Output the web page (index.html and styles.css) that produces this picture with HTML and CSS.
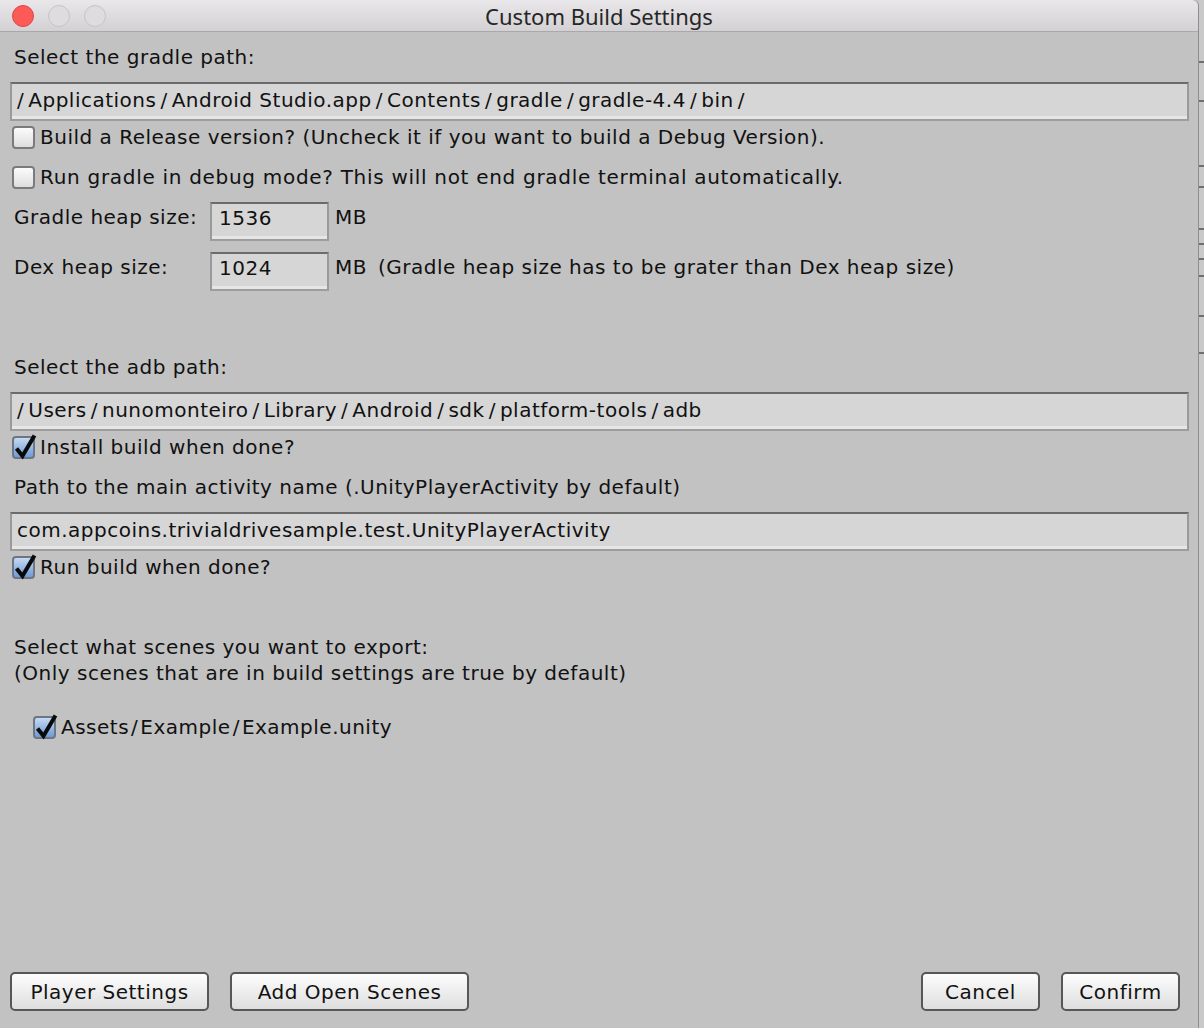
FILE: index.html
```html
<!DOCTYPE html>
<html>
<head>
<meta charset="utf-8">
<title>Custom Build Settings</title>
<link rel="stylesheet" href="styles.css">
</head>
<body>
<div class="screen">
  <div class="window">
    <div class="titlebar">
      <div class="lights">
        <span class="light red"></span>
        <span class="light"></span>
        <span class="light"></span>
      </div>
      <div class="title">Custom Build Settings</div>
    </div>
    <div class="content">
      <div class="label l-first">Select the gradle path:</div>
      <div class="field f-path"><span class="sl">/</span>Applications<span class="sl">/</span>Android Studio.app<span class="sl">/</span>Contents<span class="sl">/</span>gradle<span class="sl">/</span>gradle-4.4<span class="sl">/</span>bin<span class="sl">/</span></div>
      <label class="check c-after-field"><span class="box"></span><span>Build a Release version? (Uncheck it if you want to build a Debug Version).</span></label>
      <label class="check c-second"><span class="box"></span><span class="wide">Run gradle in debug mode? This will not end gradle terminal automatically.</span></label>
      <div class="heap h-first">
        <span class="heap-label">Gradle heap size:</span>
        <span class="field f-small">1536</span>
        <span class="unit">MB</span>
      </div>
      <div class="heap h-second">
        <span class="heap-label">Dex heap size:</span>
        <span class="field f-small">1024</span>
        <span class="unit">MB</span>
        <span class="note">(Gradle heap size has to be grater than Dex heap size)</span>
      </div>
      <div class="label l-adb">Select the adb path:</div>
      <div class="field f-path"><span class="sl">/</span>Users<span class="sl">/</span>nunomonteiro<span class="sl">/</span>Library<span class="sl">/</span>Android<span class="sl">/</span>sdk<span class="sl">/</span>platform-tools<span class="sl">/</span>adb</div>
      <label class="check c-after-field"><span class="box checked"><svg viewBox="0 0 24 26" class="tick"><path d="M3.5 14.5 L9.5 22 L21.5 1.5" /></svg></span><span>Install build when done?</span></label>
      <div class="label l-after-check">Path to the main activity name (.UnityPlayerActivity by default)</div>
      <div class="field f-path">com.appcoins.trivialdrivesample.test.UnityPlayerActivity</div>
      <label class="check c-after-field"><span class="box checked"><svg viewBox="0 0 24 26" class="tick"><path d="M3.5 14.5 L9.5 22 L21.5 1.5" /></svg></span><span>Run build when done?</span></label>
      <div class="label l-scenes">Select what scenes you want to export:</div>
      <div class="label">(Only scenes that are in build settings are true by default)</div>
      <label class="check c-scene"><span class="box checked"><svg viewBox="0 0 24 26" class="tick"><path d="M3.5 14.5 L9.5 22 L21.5 1.5" /></svg></span><span>Assets<span class="sl sl-tight">/</span>Example<span class="sl sl-tight">/</span>Example.unity</span></label>
      <div class="buttons">
        <button class="btn b-player">Player Settings</button>
        <button class="btn b-add">Add Open Scenes</button>
        <span class="spacer"></span>
        <button class="btn b-small">Cancel</button>
        <button class="btn b-small">Confirm</button>
      </div>
    </div>
  </div>
  <div class="behind"></div>
</div>
</body>
</html>
```
FILE: styles.css
```css
html, body {
  margin: 0;
  padding: 0;
  background: #c4c4c4;
}
body {
  font-family: "DejaVu Sans", "Liberation Sans", sans-serif;
  font-size: 20px;
  letter-spacing: 0.5px;
  color: #111111;
}
.screen {
  display: flex;
  width: 1204px;
  height: 1028px;
  overflow: hidden;
}
.window {
  width: 1199px;
  height: 1028px;
  display: flex;
  flex-direction: column;
  background: #c2c2c2;
  border-right: 1px solid #8e8e8e;
  border-top-right-radius: 6px;
  box-sizing: border-box;
}
.behind {
  flex: 1;
  background:
    linear-gradient(#6f6f6f, #6f6f6f) 0 61px / 100% 2px no-repeat,
    linear-gradient(#6f6f6f, #6f6f6f) 0 100px / 100% 2px no-repeat,
    linear-gradient(#6f6f6f, #6f6f6f) 0 165px / 100% 2px no-repeat,
    linear-gradient(#6f6f6f, #6f6f6f) 0 186px / 100% 2px no-repeat,
    linear-gradient(#6f6f6f, #6f6f6f) 0 228px / 100% 2px no-repeat,
    linear-gradient(#6f6f6f, #6f6f6f) 0 243px / 100% 2px no-repeat,
    linear-gradient(#6f6f6f, #6f6f6f) 0 258px / 100% 2px no-repeat,
    linear-gradient(#6f6f6f, #6f6f6f) 0 275px / 100% 2px no-repeat,
    linear-gradient(#6f6f6f, #6f6f6f) 0 315px / 100% 2px no-repeat,
    linear-gradient(#6f6f6f, #6f6f6f) 0 352px / 100% 2px no-repeat,
    #c9c9c9;
}
.titlebar {
  height: 32px;
  flex: none;
  box-sizing: border-box;
  display: flex;
  align-items: center;
  background: linear-gradient(#e9e7e9, #d3d1d3);
  border-bottom: 1px solid #a9a9a9;
  border-top-right-radius: 6px;
}
.lights {
  display: flex;
  gap: 14px;
  padding-left: 12px;
  width: 200px;
  box-sizing: border-box;
  flex: none;
}
.light {
  width: 22px;
  height: 22px;
  border-radius: 50%;
  box-sizing: border-box;
  background: #dedcde;
  border: 1px solid #c6c4c6;
}
.light.red {
  background: #fc5b57;
  border-color: #e0443e;
}
.title {
  flex: 1;
  text-align: center;
  margin-right: 200px;
  font-family: "Noto Sans", "DejaVu Sans", sans-serif;
  font-size: 22px;
  letter-spacing: 0;
  color: #262626;
  line-height: 30px;
}
.content {
  flex: 1;
  display: flex;
  flex-direction: column;
  padding: 12px 10px 17px 10px;
}
.label {
  height: 26px;
  line-height: 26px;
  padding-left: 4px;
  white-space: nowrap;
}
.l-first { margin-top: 0; }
.l-adb { margin-top: 63px; }
.l-after-check { margin-top: 14px; }
.l-scenes { margin-top: 54px; }
.field {
  box-sizing: border-box;
  height: 39px;
  line-height: 32px;
  background: #d6d6d6;
  border-top: 2px solid #6b6b6b;
  border-left: 2px solid #9a9a9a;
  border-right: 2px solid #9a9a9a;
  border-bottom: 2px solid #9d9d9d;
  box-shadow: inset 0 -3px 0 #e6e6e6;
  padding-left: 5px;
  white-space: nowrap;
}
.sl {
  margin: 0 4px;
}
.sl-tight {
  margin: 0 2px;
}
.f-path .sl:first-child {
  margin-left: 0;
}
.f-path {
  margin-top: 12px;
  width: 1179px;
}
.check {
  display: flex;
  align-items: center;
  gap: 5px;
  height: 26px;
  padding-left: 2px;
  white-space: nowrap;
}
.wide {
  letter-spacing: 0.7px;
}
.c-after-field { margin-top: 3px; }
.c-second { margin-top: 14px; }
.c-scene { margin-top: 28px; padding-left: 23px; }
.box {
  position: relative;
  width: 23px;
  height: 23px;
  flex: none;
  box-sizing: border-box;
  border: 2px solid #7b7b7b;
  border-radius: 4px;
  background: linear-gradient(#fbfbfb, #dedede);
}
.box.checked {
  border-color: #6d7682;
  background: linear-gradient(#c5d9f2, #6e9bd8);
}
.tick {
  position: absolute;
  left: -1px;
  top: -4px;
  width: 24px;
  height: 26px;
  overflow: visible;
}
.tick path {
  fill: none;
  stroke: #0a0a0a;
  stroke-width: 4;
  stroke-linecap: butt;
  stroke-linejoin: miter;
}
.heap {
  display: flex;
  align-items: flex-start;
  height: 39px;
  padding-left: 4px;
  white-space: nowrap;
  line-height: 30px;
}
.h-first { margin-top: 12px; }
.h-second { margin-top: 11px; }
.heap-label {
  width: 196px;
  flex: none;
}
.f-small {
  width: 119px;
  flex: none;
  padding-left: 7px;
  line-height: 29px;
}
.unit {
  margin-left: 6px;
}
.note {
  margin-left: 11px;
}
.buttons {
  margin-top: auto;
  display: flex;
  align-items: center;
  height: 39px;
  padding-right: 8px;
}
.spacer { flex: 1; }
.btn {
  box-sizing: border-box;
  height: 39px;
  font-family: "DejaVu Sans", "Liberation Sans", sans-serif;
  font-size: 20px;
  letter-spacing: 0.5px;
  color: #111111;
  border: 2px solid #575757;
  border-radius: 5px;
  background: linear-gradient(#fdfdfd, #dedede);
  padding: 0;
}
.b-player { width: 199px; }
.b-add { width: 239px; margin-left: 21px; }
.b-small { width: 119px; margin-left: 21px; }
```
